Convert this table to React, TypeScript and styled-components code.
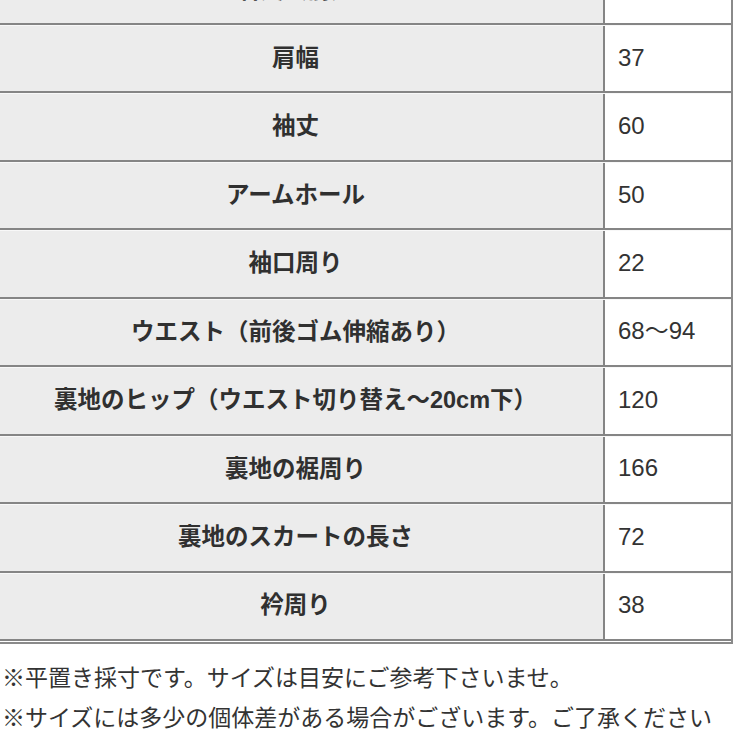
import React from "react";
import styled, { createGlobalStyle } from "styled-components";

const Global = createGlobalStyle`
  html, body {
    margin: 0;
    padding: 0;
    background: #ffffff;
    overflow: hidden;
  }
  body {
    font-family: "Liberation Sans", "Noto Sans CJK JP", sans-serif;
    color: #333333;
  }
`;

const Page = styled.div`
  width: 733px;
  height: 733px;
  overflow: hidden;
`;

const SizeTable = styled.div`
  width: 745px;
  margin-left: -12px;
  margin-top: -43.44px;
  box-sizing: border-box;
  border-right: 2px solid #8a8a8a;
  border-bottom: 2px solid #8a8a8a;
  padding-bottom: 1px;
`;

const Row = styled.div`
  display: grid;
  grid-template-columns: 617px 1fr;
  height: 68.44px;
  box-sizing: border-box;
  border-top: 1px solid #f8f8f8;
  border-bottom: 2px solid #858585;
`;

const LabelCell = styled.div`
  background: #ececec;
  border-right: 2px solid #858585;
  display: flex;
  align-items: center;
  justify-content: center;
  padding-bottom: 0;
  font-size: 23.5px;
  line-height: 1;
  font-weight: 700;
  color: #303030;
  white-space: nowrap;
`;

const ValueCell = styled.div`
  background: #ffffff;
  display: flex;
  align-items: center;
  padding-left: 13px;
  padding-bottom: 2px;
  font-size: 24px;
  line-height: 1;
  font-weight: 400;
  color: #333333;
  white-space: nowrap;
`;

const Notes = styled.div`
  margin-top: 14px;
  padding-left: 2px;
`;

const Note = styled.p`
  margin: 0;
  font-size: 23px;
  line-height: 40px;
  color: #333333;
  white-space: nowrap;
`;

const rows: [string, string][] = [
  ["着丈（前）", "98"],
  ["肩幅", "37"],
  ["袖丈", "60"],
  ["アームホール", "50"],
  ["袖口周り", "22"],
  ["ウエスト（前後ゴム伸縮あり）", "68〜94"],
  ["裏地のヒップ（ウエスト切り替え〜20cm下）", "120"],
  ["裏地の裾周り", "166"],
  ["裏地のスカートの長さ", "72"],
  ["衿周り", "38"],
];

export default function App() {
  return (
    <Page>
      <Global />
      <SizeTable>
        {rows.map(([label, value]) => (
          <Row key={label}>
            <LabelCell>{label}</LabelCell>
            <ValueCell>{value}</ValueCell>
          </Row>
        ))}
      </SizeTable>
      <Notes>
        <Note>※平置き採寸です。サイズは目安にご参考下さいませ。</Note>
        <Note>※サイズには多少の個体差がある場合がございます。ご了承ください</Note>
      </Notes>
    </Page>
  );
}
